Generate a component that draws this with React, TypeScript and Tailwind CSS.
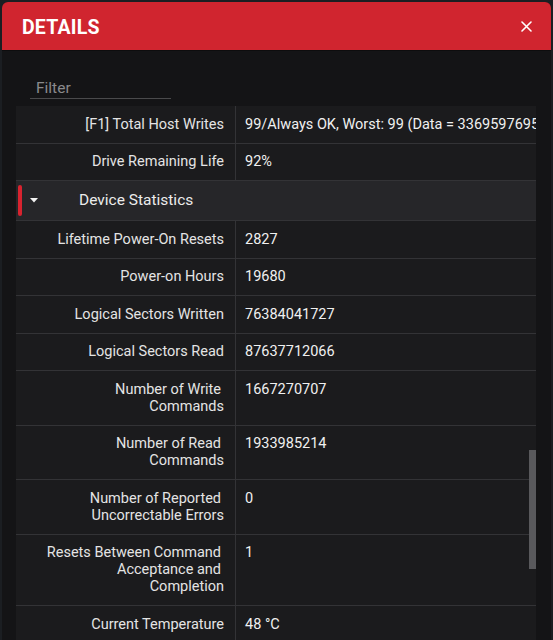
import type { ReactNode } from "react";

type DetailRow = {
  label: string[];
  value: string;
};

const topRows: DetailRow[] = [
  {
    label: ["[F1] Total Host Writes"],
    value: "99/Always OK, Worst: 99 (Data = 3369597695",
  },
  { label: ["Drive Remaining Life"], value: "92%" },
];

const statRows: DetailRow[] = [
  { label: ["Lifetime Power-On Resets"], value: "2827" },
  { label: ["Power-on Hours"], value: "19680" },
  { label: ["Logical Sectors Written"], value: "76384041727" },
  { label: ["Logical Sectors Read"], value: "87637712066" },
  { label: ["Number of Write", "Commands"], value: "1667270707" },
  { label: ["Number of Read", "Commands"], value: "1933985214" },
  { label: ["Number of Reported", "Uncorrectable Errors"], value: "0" },
  {
    label: ["Resets Between Command", "Acceptance and", "Completion"],
    value: "1",
  },
  { label: ["Current Temperature"], value: "48 °C" },
];

export default function App() {
  return (
    <div
      className="h-[640px] w-[553px] overflow-hidden bg-[#1b1e22] px-[2px] pt-[2px]"
      style={{ fontFamily: "Roboto, 'Noto Sans', sans-serif" }}
    >
      <div className="flex h-[700px] flex-col overflow-hidden rounded-t-[6px] bg-[#141416]">
        <header className="flex h-[49px] shrink-0 items-center justify-between border-b border-[#0d0d0e] bg-[#d0252f] pl-[20px] pr-[19px]">
          <h1 className="pt-[4px] text-[19.5px] font-bold tracking-[0.2px] text-white">
            DETAILS
          </h1>
          <button type="button" aria-label="Close" className="text-white">
            <svg width="11" height="11" viewBox="0 0 11 11" aria-hidden="true">
              <path
                d="M1 1 L10 10 M10 1 L1 10"
                stroke="currentColor"
                strokeWidth="1.6"
                strokeLinecap="round"
              />
            </svg>
          </button>
        </header>

        <div className="ml-[28px] mt-[27px] h-[21px] w-[141px] shrink-0 border-b border-[#4a4a4c]">
          <input
            placeholder="Filter"
            className="block h-[20px] w-full bg-transparent pl-[6px] text-[15.5px] leading-[20px] text-[#ddd] outline-none placeholder:text-[#8a8a8c]"
          />
        </div>

        <div className="relative ml-[14px] mt-[7px] w-[520px] flex-1 overflow-hidden">
          {topRows.map((row) => (
            <Row key={row.label.join(" ")} row={row} />
          ))}

          <div className="flex h-[40px] items-center border-b border-[#333336] bg-[#262629]">
            <span className="ml-[2px] h-[31px] w-[4px] rounded-[2px] bg-[#d8232f]" />
            <svg
              width="8"
              height="5"
              viewBox="0 0 8 5"
              className="ml-[8px]"
              aria-hidden="true"
            >
              <path d="M0 0 H8 L4 4.5 Z" fill="#f2f2f2" />
            </svg>
            <span className="ml-[41px] text-[15.5px] text-[#ececec]">
              Device Statistics
            </span>
          </div>

          {statRows.map((row) => (
            <Row key={row.label.join(" ")} row={row} />
          ))}

          <div className="absolute right-0 top-[344px] h-[119px] w-[7px] bg-[#59595c]" />
        </div>
      </div>
    </div>
  );
}

function Row({ row }: { row: DetailRow }) {
  return (
    <div className="flex border-b border-[#333336] bg-[#1b1b1d] text-[14.5px] leading-[17px]">
      <div className="w-[220px] shrink-0 border-r border-[#333336] py-[9.75px] pr-[11px] text-right text-[#e4e4e4]">
        {row.label.map((line, index) => (
          <Line key={line} last={index === row.label.length - 1}>
            {line}
          </Line>
        ))}
      </div>
      <div className="overflow-hidden whitespace-nowrap py-[9.75px] pl-[9px] text-[#f0f0f0]">
        {row.value}
      </div>
    </div>
  );
}

function Line({ children, last }: { children: ReactNode; last: boolean }) {
  return <div className={last ? "" : "pr-[3px]"}>{children}</div>;
}
